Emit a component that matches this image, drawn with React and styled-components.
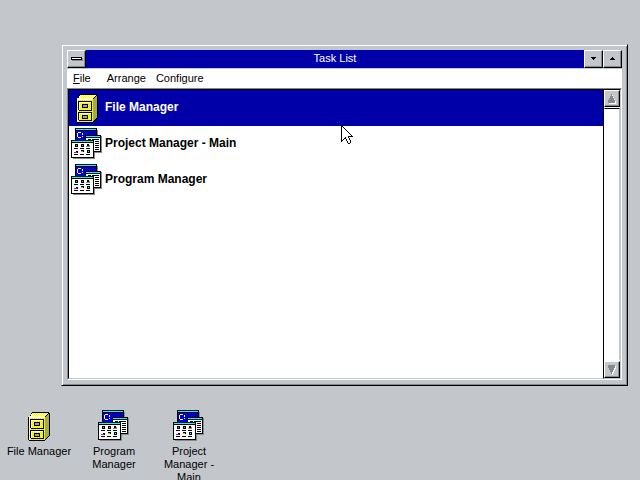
import styled, { createGlobalStyle } from 'styled-components'

const GlobalStyle = createGlobalStyle`
  * {
    box-sizing: border-box;
  }
  body {
    margin: 0;
    font: 11px/13px 'Liberation Sans', Arial, sans-serif;
    color: #000;
    background: #c3c7cb;
  }
  button {
    font: inherit;
    color: inherit;
    border: 0;
    padding: 0;
  }
  svg {
    flex: none;
  }
`

const Desktop = styled.main`
  display: flex;
  flex-direction: column;
  height: 100vh;
  padding-top: 44px;
  overflow: hidden;
`

const Window = styled.section`
  display: flex;
  flex: 1;
  flex-direction: column;
  min-height: 0;
  margin: 0 12px 0 61px;
  padding: 4px;
  border: 1px solid;
  border-color: #c3c7cb #000 #000 #c3c7cb;
  box-shadow: inset 1px 1px #fff, inset -1px -1px #868a8e;
`

const TitleBar = styled.header`
  display: flex;
  flex: 0 0 19px;
  margin: 1px 1px 0;
  border-bottom: 1px solid #c3c7cb;
  background: #0000a8;
  color: #fff;
`

const Title = styled.h1`
  flex: 1;
  margin: 0;
  font: inherit;
  line-height: 16px;
  text-align: center;
`

const FrameButton = styled.button`
  display: flex;
  align-items: center;
  justify-content: center;
  flex: 0 0 19px;
  background: #c3c7cb;
  border: 1px solid;
  border-color: #fff #000 #000 #fff;
  box-shadow: inset -1px -1px #868a8e;
`

const ScrollButton = styled(FrameButton)`
  flex: 0 0 17px;
`

const MenuBar = styled.nav`
  display: flex;
  flex: 0 0 19px;
  gap: 10px;
  margin: 0 1px;
  padding-left: 6px;
  background: #fff;
`

const MenuItem = styled.button`
  background: none;
  line-height: 16px;
  padding-bottom: 2px;

  &:first-child {
    margin-right: 6px;
  }
`

const ListFrame = styled.div`
  display: flex;
  flex: 1;
  min-height: 0;
  margin: 0 1px 1px;
  border: 1px solid;
  border-color: #868a8e #fff #fff #868a8e;
  background: #fff;
`

const TaskList = styled.ul`
  flex: 1;
  margin: 0;
  padding: 0;
  list-style: none;
  border: 1px solid;
  border-color: #000 #000 #c3c7cb #000;
`

const TaskButton = styled.button`
  display: flex;
  align-items: flex-start;
  gap: 2px;
  width: 100%;
  height: 36px;
  padding: 2px;
  font-size: 12px;
  font-weight: bold;
  line-height: 30px;
  background: ${({ $selected }) => ($selected ? '#0000a8' : '#fff')};
  color: ${({ $selected }) => ($selected ? '#fff' : '#000')};
`

const ScrollBar = styled.div`
  display: flex;
  flex: 0 0 17px;
  flex-direction: column;
  border: solid;
  border-width: 1px 1px 1px 0;
  border-color: #000 #c3c7cb #c3c7cb;
`

const ScrollTrack = styled.div`
  flex: 1;
  margin: 1px 0;
  border: 1px solid;
  border-color: #000 #c3c7cb #fff #fff;
`

const IconRow = styled.div`
  display: flex;
  flex: 0 0 94px;
  min-height: 0;
  padding: 24px 0 0 2px;
`

const DesktopIcon = styled.button`
  display: flex;
  flex: 0 0 75px;
  flex-direction: column;
  align-items: center;
  justify-content: flex-start;
  gap: 3px;
  padding-right: 1px;
  background: none;
`

const IconLabel = styled.span`
  max-width: 68px;
`

const Pointer = styled.svg`
  position: absolute;
  top: 125px;
  left: 341px;
`

// checkerboard of single pixels over a rectangle
const dither = (x, y, w, h) => {
  let d = ''
  for (let j = y; j < y + h; j++) {
    for (let i = x; i < x + w; i++) {
      if ((i + j) % 2) d += `M${i} ${j}h1v1h-1z`
    }
  }
  return d
}

// one path for every cell of the map that holds the given character
const pixels = (rows, char) =>
  rows
    .map((row, y) => [...row].map((c, x) => (c === char ? `M${x} ${y}h1v1h-1z` : '')).join(''))
    .join('')

const arrow = [
  'X',
  'XX',
  'X.X',
  'X..X',
  'X...X',
  'X....X',
  'X.....X',
  'X......X',
  'X.......X',
  'X........X',
  'X.........X',
  'X......XXXXX',
  'X...X..X',
  'X..XX...X',
  'X.X  X..X',
  'XX   X...X',
  'X     X..X',
  '      X..X',
  '       XX',
]

const CabinetIcon = () => (
  <svg width="32" height="32" shapeRendering="crispEdges" aria-hidden="true">
    <path d="M9 2h17v1h1v23h-1v1h-1v1h-1v1h-1v1h-1v1H6v-1H5V7h1V6h1V5h1V3h1z" />
    <path d="M9 3h16v1h-1v1h-1v1h-1v1H6V6h2V4h1z" fill="#ffffc0" />
    <path d={dither(9, 3, 14, 3)} fill="#ff0" />
    <path d="M22 7h1V6h1V5h1V4h1v22h-1v1h-1v1h-1v1h-1z" fill="#a8a850" />
    <path d="M6 7h16v23H6z" fill="#ff0" />
    <path d={dither(6, 7, 16, 23)} fill="#dfdf60" />
    <path d="M6 7h1v23H6zM7 7h14v1H7z" fill="#ffffc0" />
    <path d="M20 9h1v10H8v-1h12zM20 20h1v9H8v-1h12zM7 9h13v1H8v8H7zM7 20h13v1H8v7H7z" />
    <path d="M8 10h12v1H9v7H8zM8 21h12v1H9v6H8z" fill="#ffffc0" />
    <path d="M11 12h6v4h-6zM11 23h6v4h-6z" />
    <path d="M12 13h4v2h-4zM12 24h4v2h-4z" fill="#a8a850" />
  </svg>
)

const GroupsIcon = () => (
  <svg width="32" height="32" shapeRendering="crispEdges" aria-hidden="true">
    <path d="M6 2h21v6h4v17h-7v6H2v-1h20V2z" fill="#868a8e" />
    <path d="M4 0h22v12H4zM14 7h16v17H14zM0 12h23v18H0z" />
    <path d="M5 1h20v1H5zM15 8h14v1H15zM1 13h21v1H1z" fill="#00ffff" />
    <path d="M5 3h20v4H14v5H5z" fill="#0000ff" />
    <path d={dither(5, 3, 20, 4) + dither(5, 7, 9, 5)} fill="#0000a8" />
    <path d="M7 4h3v1H7zM6 5h1v4H6zM7 9h3v1H7zM11 5h1v2h-1zM11 8h1v1h-1z" fill="#fff" />
    <path d="M15 10h14v13h-6V12h-8zM1 15h21v14H1z" fill="#fff" />
    <path d="M17 11h3v1h-3zM21 11h7v1h-7zM24 13h4v1h-4zM24 15h4v1h-4zM24 17h4v1h-4zM24 19h4v1h-4zM24 21h4v1h-4z" />
    <path d="M4 16h3v3H4zM10 16h3v3h-3zM16 16h2v3h-2zM3 20h4v1H3zM9 20h4v1H9zM15 20h4v1h-4zM5 23h2v2H5zM10 22h3v2h-3zM16 22h3v3h-3zM3 26h4v1H3zM9 26h4v1H9zM15 26h4v1h-4z" />
    <path d="M5 17h1v1H5zM11 17h1v1h-1zM15 18h4v1h-4zM18 17h1v1h-1z" fill="#868a8e" />
    <path d="M3 24h3v1H3z" fill="#c000c0" />
    <path d="M10 23h2v1h-2z" fill="#c0c000" />
    <path d="M17 23h1v1h-1z" fill="#00ffff" />
  </svg>
)

const tasks = [
  { name: 'File Manager', Icon: CabinetIcon, selected: true },
  { name: 'Project Manager - Main', Icon: GroupsIcon },
  { name: 'Program Manager', Icon: GroupsIcon },
]

const desktopIcons = [
  { name: 'File Manager', Icon: CabinetIcon },
  { name: 'Program Manager', Icon: GroupsIcon },
  { name: 'Project Manager - Main', Icon: GroupsIcon },
]

const App = () => {
  return (
    <Desktop>
      <GlobalStyle />
      <Window>
        <TitleBar>
          <FrameButton aria-label="Control menu">
            <svg width="13" height="4" shapeRendering="crispEdges">
              <path d="M1 0h11v3H1z" />
              <path d="M2 1h9v1H2z" fill="#fff" />
              <path d="M2 3h11v1H2zM12 1h1v2h-1z" fill="#868a8e" />
            </svg>
          </FrameButton>
          <Title>Task List</Title>
          <FrameButton aria-label="Minimize">
            <svg width="7" height="4" shapeRendering="crispEdges">
              <path d="M1 0h5v1H1zM2 1h3v1H2zM3 2h1v1H3z" />
            </svg>
          </FrameButton>
          <FrameButton aria-label="Maximize">
            <svg width="7" height="4" shapeRendering="crispEdges">
              <path d="M3 0h1v1H3zM2 1h3v1H2zM1 2h5v1H1z" />
            </svg>
          </FrameButton>
        </TitleBar>
        <MenuBar>
          <MenuItem><u>F</u>ile</MenuItem>
          <MenuItem>Arrange</MenuItem>
          <MenuItem>Configure</MenuItem>
        </MenuBar>
        <ListFrame>
          <TaskList>
            {tasks.map(({ name, Icon, selected }) => (
              <li key={name}>
                <TaskButton $selected={selected}>
                  <Icon />
                  {name}
                </TaskButton>
              </li>
            ))}
          </TaskList>
          <ScrollBar>
            <ScrollButton aria-label="Scroll up">
              <svg width="10" height="10" shapeRendering="crispEdges">
                <path d="M5 1h1v2h1v2h1v2h1v3H2V7h1V5h1V3h1z" fill="#fff" />
                <path d="M4 0h1v2h1v2h1v2h1v3H1V6h1V4h1V2h1z" fill="#868a8e" />
              </svg>
            </ScrollButton>
            <ScrollTrack />
            <ScrollButton aria-label="Scroll down">
              <svg width="10" height="10" shapeRendering="crispEdges">
                <path d="M2 1h7v3H8v2H7v2H6v2H5V8H4V6H3V4H2z" fill="#fff" />
                <path d="M1 0h7v3H7v2H6v2H5v2H4V7H3V5H2V3H1z" fill="#868a8e" />
              </svg>
            </ScrollButton>
          </ScrollBar>
        </ListFrame>
      </Window>
      <IconRow>
        {desktopIcons.map(({ name, Icon }) => (
          <DesktopIcon key={name}>
            <Icon />
            <IconLabel>{name}</IconLabel>
          </DesktopIcon>
        ))}
      </IconRow>
      <Pointer width="12" height="20" shapeRendering="crispEdges" aria-hidden="true">
        <path d={pixels(arrow, 'X')} />
        <path d={pixels(arrow, '.')} fill="#fff" />
      </Pointer>
    </Desktop>
  )
}

export default App
